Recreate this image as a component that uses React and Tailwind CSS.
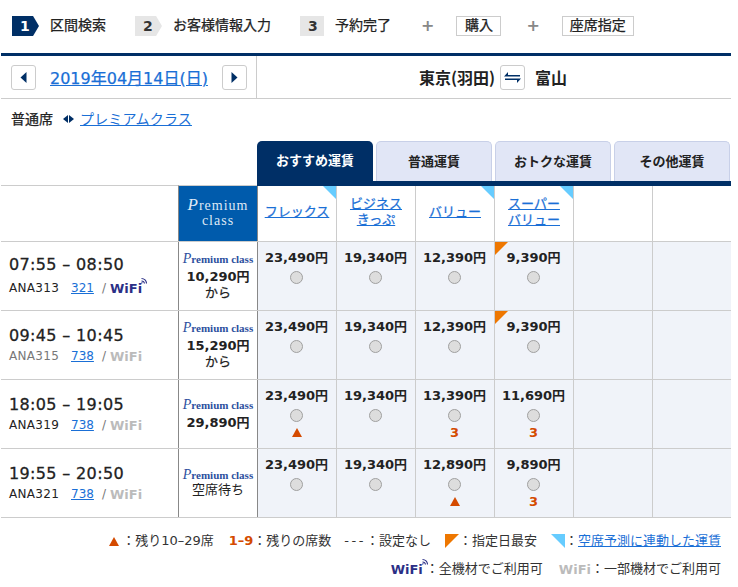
const fontStack = { fontFamily: '"DejaVu Sans", "Noto Sans CJK JP", sans-serif' };

const flights = [
  { time: "07:55 – 08:50", no: "ANA313", plane: "321", wifi: true, premium: "10,290円", kara: true,
    fares: [{ p: "23,490円" }, { p: "19,340円" }, { p: "12,390円" }, { p: "9,390円", low: true }] },
  { time: "09:45 – 10:45", no: "ANA315", plane: "738", premium: "15,290円", kara: true, gray: true,
    fares: [{ p: "23,490円" }, { p: "19,340円" }, { p: "12,390円" }, { p: "9,390円", low: true }] },
  { time: "18:05 – 19:05", no: "ANA319", plane: "738", premium: "29,890円",
    fares: [{ p: "23,490円", tri: true }, { p: "19,340円" }, { p: "13,390円", seats: 3 }, { p: "11,690円", seats: 3 }] },
  { time: "19:55 – 20:50", no: "ANA321", plane: "738", wait: true,
    fares: [{ p: "23,490円" }, { p: "19,340円" }, { p: "12,890円", tri: true }, { p: "9,890円", seats: 3 }] },
];

const tabs = ["普通運賃", "おトクな運賃", "その他運賃"];

const Link = ({ className = "", children }) => (
  <a href="#" className={`text-[#1a6fd6] underline ${className}`}>{children}</a>
);

const Corner = ({ color = "#66ccff", side = "right", size = 13 }) => (
  <svg width={size} height={size} viewBox="0 0 13 13" className={`absolute top-0 ${side === "right" ? "right-0" : "left-0"}`}>
    <path d={side === "right" ? "M0 0H13V13Z" : "M0 0H13L0 13Z"} fill={color} />
  </svg>
);

const WifiMark = ({ on, className = "" }) => (
  <span className={`relative inline-block font-bold text-[13px] leading-none ${on ? "text-[#2b2f86]" : "text-[#bbbbbb]"} ${className}`}>
    WiFi
    {on && (
      <svg width="6" height="7" viewBox="0 0 6 7" className="absolute -right-[5px] -top-[5px]" fill="none" stroke="#2b2f86" strokeWidth="1.1">
        <path d="M0.500 6.500a1 1 0 0 1 1 -1" />
        <path d="M0.500 4a3 3 0 0 1 3 2.500" />
        <path d="M0.500 1.500a5 5 0 0 1 5 5" />
      </svg>
    )}
  </span>
);

const PremiumLabel = ({ className = "" }) => (
  <span className={`leading-[16px] font-['Liberation_Serif'] font-bold ${className}`}>
    <span className="text-[14px] italic font-normal">P</span>remium class
  </span>
);

const Triangle = () => (
  <svg width="10" height="9" viewBox="0 0 10 9" className="block"><path d="M5 0L10 9H0Z" fill="#d44a00" /></svg>
);

const Radio = () => (
  <span className="block w-[13px] h-[13px] rounded-full border border-[#a0a0a0] bg-[#dddddd]" />
);

const Arrow = ({ dir }) => (
  <svg width="7" height="11" viewBox="0 0 7 11"><path d={dir === "left" ? "M6.500 0V11L0.500 5.500Z" : "M0.500 0V11L6.500 5.500Z"} fill="#002f66" /></svg>
);

const IconBtn = ({ children }) => (
  <button className="w-[25px] h-[25px] flex items-center justify-center border border-[#cccccc] rounded-[3px] bg-white">{children}</button>
);

const Step = ({ n, label, active, arrow }) => (
  <div className="flex items-center">
    <div
      className={`h-5 flex items-center pl-[8px] text-[14px] font-bold ${active ? "w-[27px] bg-[#002f66] text-white" : arrow ? "w-[27px] bg-[#e6e6e6] text-[#333333]" : "w-6 bg-[#e6e6e6] text-[#333333]"} ${arrow || active ? "[clip-path:polygon(0_0,78%_0,100%_50%,78%_100%,0_100%)]" : ""}`}
    >
      {n}
    </div>
    <span className="text-[14px] text-[#222222] ml-[11px] mb-[2px] [-webkit-text-stroke:0.25px]">{label}</span>
  </div>
);

const Plus = () => <span className="text-[16px] font-bold leading-none text-[#888888]">+</span>;

export default function App() {
  return (
    <div className="w-[738px] h-[587px] bg-white text-[#222222] overflow-hidden" style={fontStack}>
      <div className="w-[730px] ml-px">
        {/* steps */}
        <div className="h-[53px] pt-4 pl-[11px] flex items-start">
          <div className="flex h-5 items-center">
            <Step n="1" label="区間検索" active />
            <div className="w-[29px]" />
            <Step n="2" label="お客様情報入力" arrow />
            <div className="w-[29px]" />
            <Step n="3" label="予約完了" />
            <div className="w-[30px]" />
            <Plus />
            <div className="w-[22px]" />
            <span className="h-5 w-[45px] pb-[2px] border border-[#cccccc] flex items-center justify-center text-[14px] [-webkit-text-stroke:0.25px]">購入</span>
            <div className="w-[25px]" />
            <Plus />
            <div className="w-[22px]" />
            <span className="h-5 w-[72px] pb-[2px] border border-[#cccccc] flex items-center justify-center text-[14px] [-webkit-text-stroke:0.25px]">座席指定</span>
          </div>
        </div>

        {/* date + route */}
        <div className="border-t-[3px] border-[#002f66] border-b border-b-[#cccccc] h-[46px] flex">
          <div className="w-[256px] border-r border-[#cccccc] flex items-center pl-[10px]">
            <IconBtn><Arrow dir="left" /></IconBtn>
            <Link className="text-[16px] ml-[14px] mt-[3px] w-[172px] [-webkit-text-stroke:0.25px]">2019年04月14日(日)</Link>
            <IconBtn><Arrow dir="right" /></IconBtn>
          </div>
          <div className="flex-1 flex items-center pl-[162px] font-['Noto_Sans_CJK_JP'] font-bold text-[16px]">
            <span className="w-[81px]">東京(羽田)</span>
            <IconBtn>
              <svg width="17" height="11" viewBox="0 0 17 11" fill="#002f66">
                <path d="M4 0V3H16V4.500H0Z" />
                <path d="M13 11V8H1V6.500H17Z" />
              </svg>
            </IconBtn>
            <span className="ml-[10px]">富山</span>
          </div>
        </div>

        {/* class switch */}
        <div className="h-[42px] pb-[2px] flex items-center pl-[10px]">
          <span className="text-[14px] [-webkit-text-stroke:0.25px]">普通席</span>
          <span className="flex items-center gap-px ml-[10px]">
            <svg width="5" height="8" viewBox="0 0 5 8"><path d="M5 0V8L0 4Z" fill="#002f66" /></svg>
            <svg width="5" height="8" viewBox="0 0 5 8"><path d="M0 0V8L5 4Z" fill="#002f66" /></svg>
          </span>
          <Link className="text-[14px] ml-[6px] tracking-[0.15px]">プレミアムクラス</Link>
        </div>

        {/* tabs */}
        <div className="flex pl-[256px] gap-[3px] h-[40px]">
          <div className="w-[116px] bg-[#002f66] text-white rounded-t-[5px] flex items-center justify-center text-[13px] font-bold">おすすめ運賃</div>
          {tabs.map((t) => (
            <div key={t} className="w-[116px] bg-[#e1e6f6] border border-b-0 border-[#c8d0e8] rounded-t-[5px] flex items-center justify-center text-[13px] font-bold text-[#222222]">{t}</div>
          ))}
        </div>

        {/* fare table */}
        <div className="border-b border-[#cccccc]">
          <div className="flex h-[61px] border-b border-[#cccccc]">
            <div className="w-[177px] mt-1 border-t border-[#cccccc]" />
            <div className="w-[79px] mt-1 pb-[3px] border-t border-[#cccccc] border-l border-l-[#888888] bg-[#005bac] text-[#dfe8f5] flex flex-col items-center justify-center font-['Liberation_Serif'] text-[14px] leading-[15px] tracking-[1px]">
              <span><span className="text-[17px] italic">P</span>remium</span>
              <span>class</span>
            </div>
            <div className="flex-1 flex flex-col">
              <div className="h-[5px] bg-[#002f66]" />
              <div className="flex-1 grid grid-cols-[repeat(6,79px)] text-[13px] leading-[16px]">
                {[["フレックス"], ["ビジネス", "きっぷ"], ["バリュー"], ["スーパー", "バリュー"], [], []].map((lines, i) => (
                  <div key={i} className={`relative border-l ${i === 0 ? "border-l-[#888888]" : "border-l-[#cccccc]"} flex flex-col items-center justify-center pb-1`}>
                    {i !== 1 && i < 4 && <Corner />}
                    {lines.map((l) => <Link key={l} className="[-webkit-text-stroke:0.25px]">{l}</Link>)}
                  </div>
                ))}
              </div>
            </div>
          </div>

          {flights.map((f, idx) => (
            <div key={f.no} className={`flex ${idx < 3 ? "h-[69px] border-b border-[#cccccc]" : "h-[68px]"}`}>
              <div className={`w-[177px] pl-2 ${f.wifi ? "pt-[13px]" : "pt-[15px]"}`}>
                <div className="text-[16px] leading-[20px] tracking-[0.35px] [-webkit-text-stroke:0.3px]">{f.time}</div>
                <div className={`flex items-center text-[12px] leading-[16px] text-[#222222] ${f.wifi ? "mt-[5px]" : "mt-[2px]"}`}>
                  <span className={`w-[62px] tracking-[0.3px] ${f.gray ? "text-[#777777]" : ""}`}>{f.no}</span>
                  <Link>{f.plane}</Link>
                  <span className="text-[#777777] ml-[8px] mr-[4px]">/</span>
                  <WifiMark on={f.wifi} />
                </div>
              </div>
              <div className="w-[79px] border-l border-[#888888] flex flex-col items-center justify-center pb-px leading-[16px]">
                <PremiumLabel className="text-[#2c4f9e] text-[11px]" />
                {f.premium && <span className="text-[13px] font-bold mt-[2px]">{f.premium}</span>}
                {f.kara && <span className="text-[13px] [-webkit-text-stroke:0.25px]">から</span>}
                {f.wait && <span className="text-[13px] -mt-px">空席待ち</span>}
              </div>
              <div className="flex-1 grid grid-cols-[repeat(6,79px)] bg-[#f0f3f9]">
                {[...f.fares, null, null].map((fare, i) => (
                  <div key={i} className={`relative border-l ${i === 0 ? "border-l-[#888888]" : "border-l-[#cccccc]"} flex flex-col items-center pt-[6px] pr-px`}>
                    {fare && (
                      <>
                        {fare.low && <Corner color="#ee7700" side="left" />}
                        <span className="text-[13px] leading-[20px] font-bold">{fare.p}</span>
                        <span className="mt-[3px]"><Radio /></span>
                        {fare.tri && <span className="mt-[6px]"><Triangle /></span>}
                        {fare.seats && <span className="text-[13px] leading-[14px] mt-[4px] font-bold text-[#d44a00]">{fare.seats}</span>}
                      </>
                    )}
                  </div>
                ))}
              </div>
            </div>
          ))}
        </div>

        {/* legend */}
        <div className="text-[13px] leading-[16px] pr-[10px] pt-[15px] flex flex-col items-end gap-3 text-[#333333]">
          <div className="flex items-center">
            <Triangle />
            <span className="ml-[3px]">：残り10–29席</span>
            <span className="ml-[15px] font-bold text-[#d44a00]">1–9</span>
            <span>：残りの席数</span>
            <span className="ml-[13px] tracking-[2.5px]">---</span>
            <span>：設定なし</span>
            <svg width="14" height="14" viewBox="0 0 14 14" className="ml-[14px]"><path d="M0 0H14L0 14Z" fill="#ee7700" /></svg>
            <span>：指定日最安</span>
            <svg width="14" height="14" viewBox="0 0 14 14" className="ml-[14px]"><path d="M0 0H14V14Z" fill="#66ccff" /></svg>
            <span>：</span>
            <Link>空席予測に連動した運賃</Link>
          </div>
          <div className="flex items-center">
            <WifiMark on />
            <span className="ml-[3px]">：全機材でご利用可</span>
            <WifiMark className="ml-4" />
            <span>：一部機材でご利用可</span>
          </div>
        </div>
      </div>
    </div>
  );
}
